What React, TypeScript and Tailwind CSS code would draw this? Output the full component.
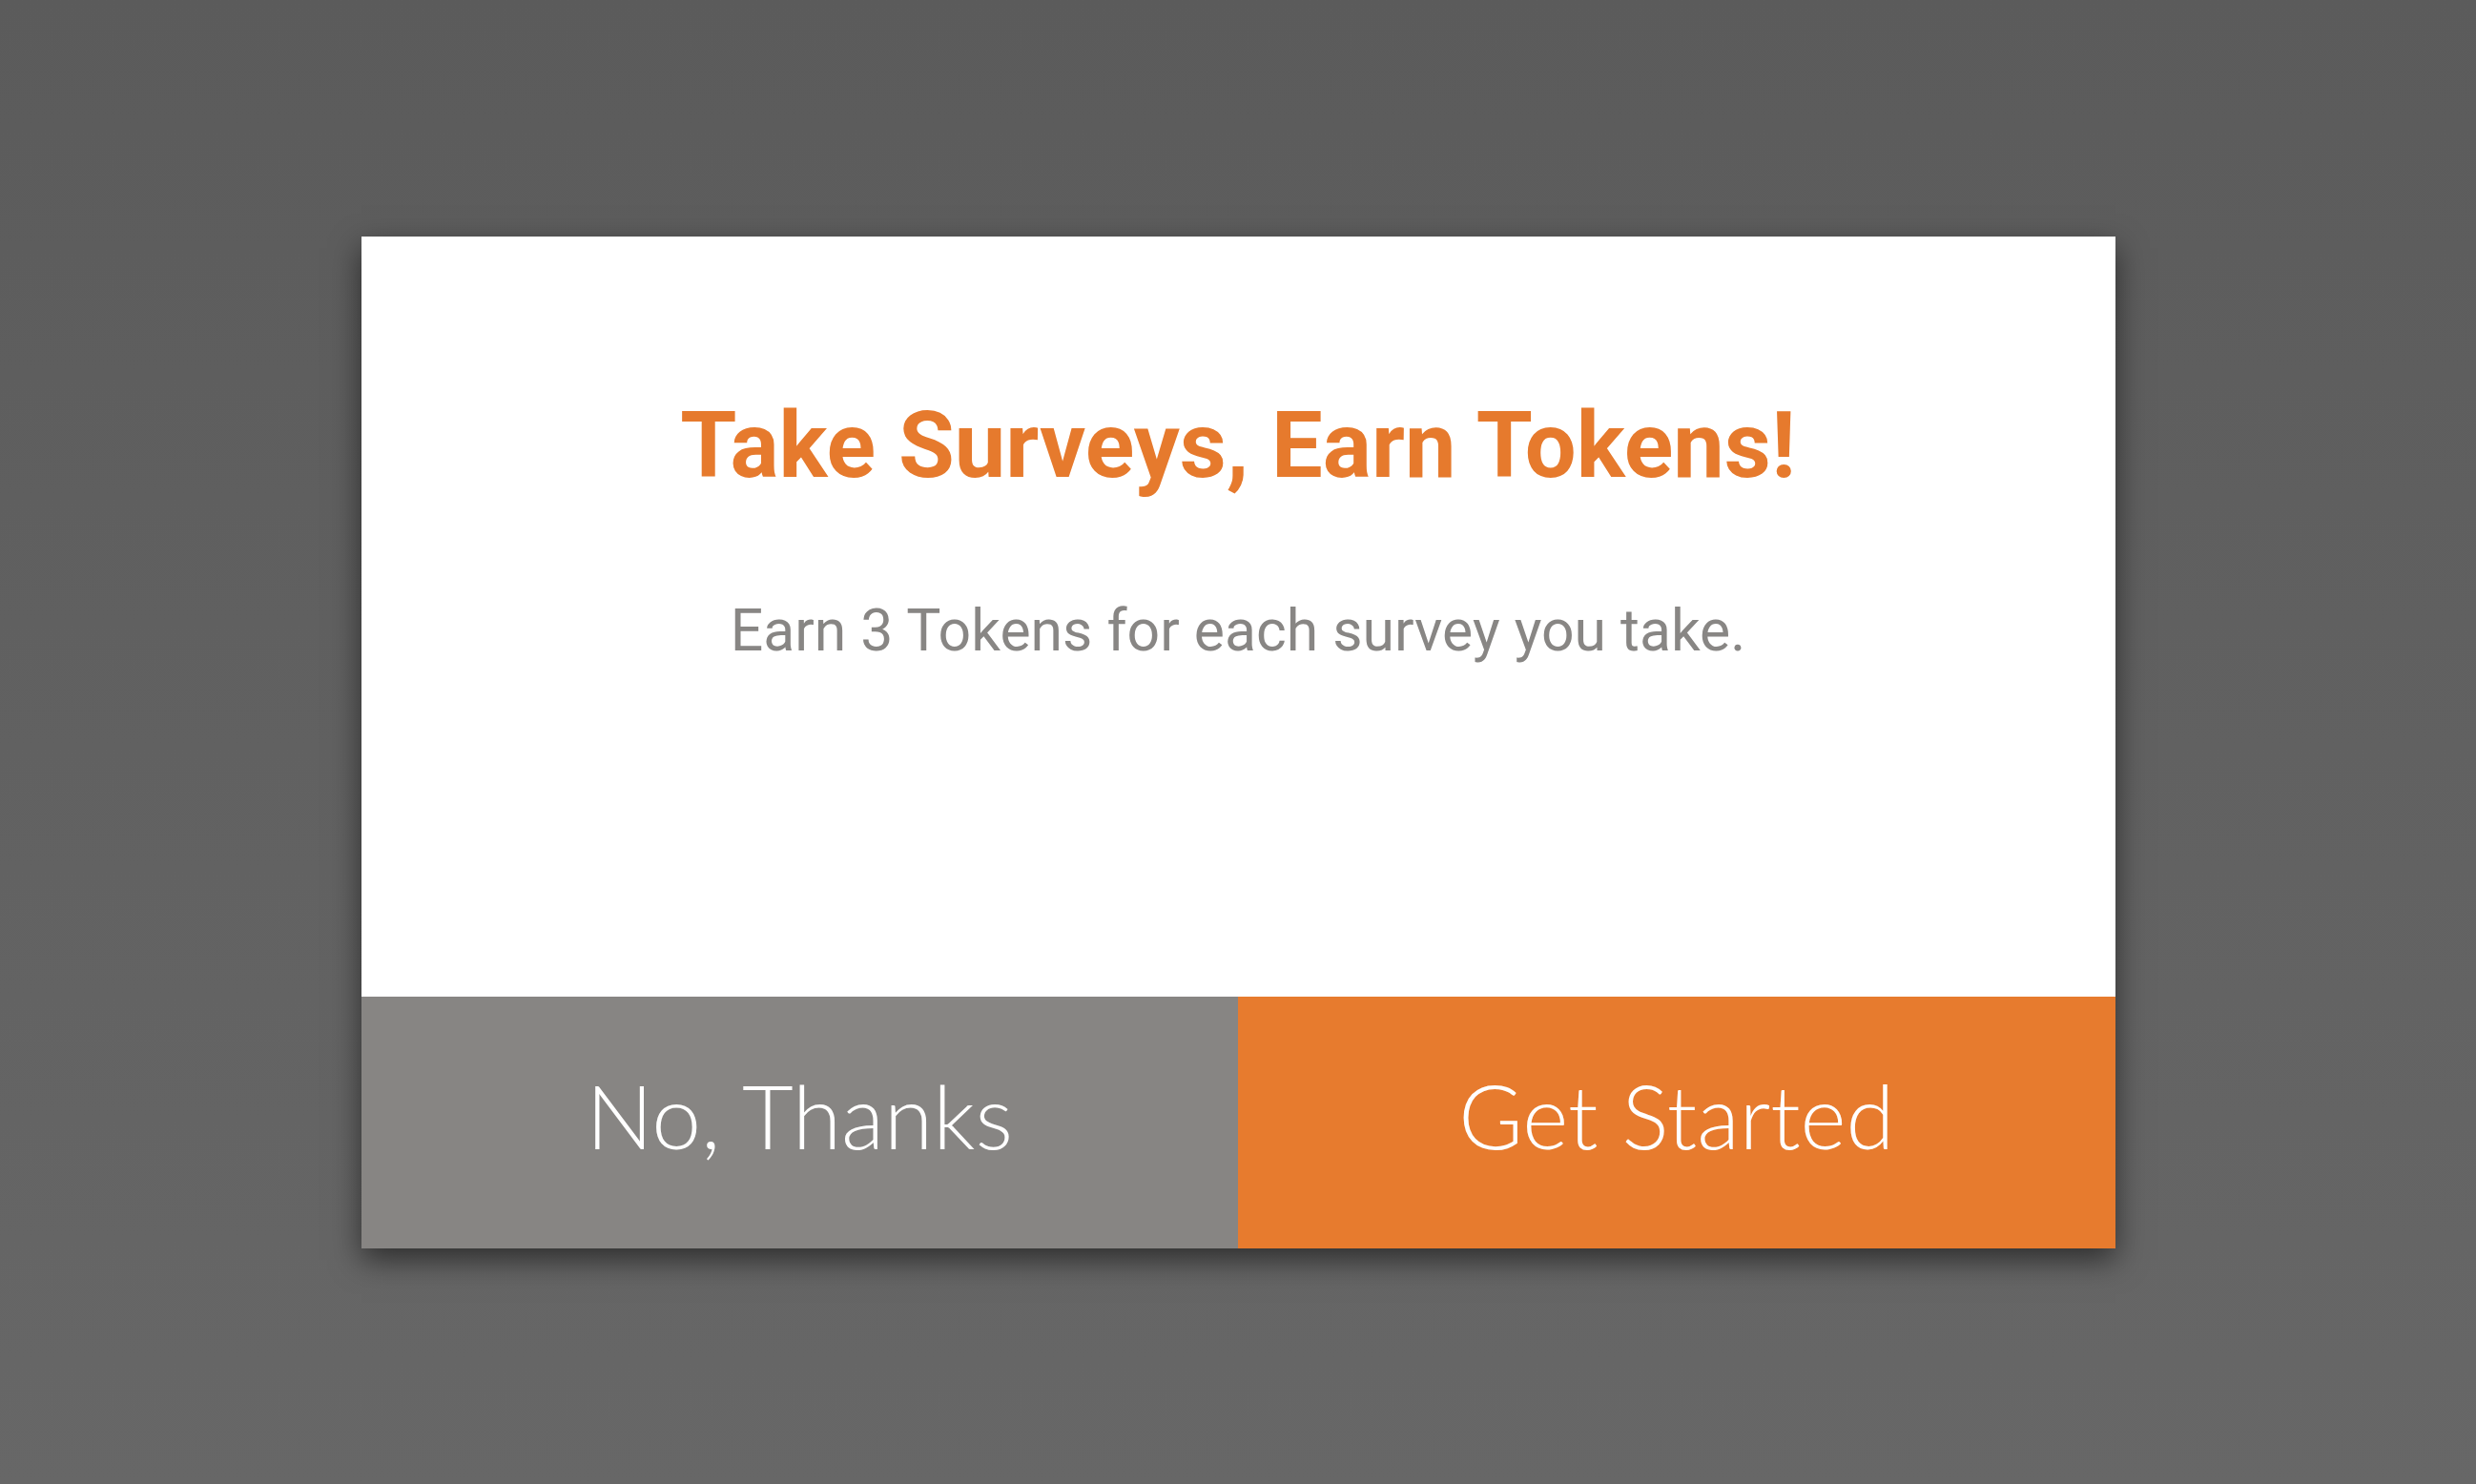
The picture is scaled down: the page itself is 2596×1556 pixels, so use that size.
import React from "react";

export default function App() {
  return (
    <div className="w-[2596px] h-[1556px] flex items-center justify-center bg-gradient-to-b from-[#5b5b5b] to-[#676767]">
      <div className="w-[1839px] h-[1061px] flex flex-col bg-white shadow-[0_12px_30px_rgba(0,0,0,0.55)]">
        <div className="flex-1 flex flex-col items-center pt-[164px]" style={{ fontFamily: "Roboto, 'Liberation Sans', sans-serif" }}>
          <h1 className="text-[95.5px] leading-[110px] font-bold text-[#e67a2d]">
            Take Surveys, Earn Tokens!
          </h1>
          <p className="mt-[100px] text-[60.7px] leading-[80px] text-[#888684]">
            Earn 3 Tokens for each survey you take.
          </p>
        </div>
        <div className="h-[264px] flex" style={{ fontFamily: "Lato, 'Open Sans', sans-serif" }}>
          <button className="flex-1 bg-[#878583] text-white text-[93px] font-light flex items-center justify-center pb-[14px]">
            No, Thanks
          </button>
          <button className="flex-1 bg-[#e77b2e] text-white text-[92px] font-light flex items-center justify-center pb-[14px]">
            Get Started
          </button>
        </div>
      </div>
    </div>
  );
}
